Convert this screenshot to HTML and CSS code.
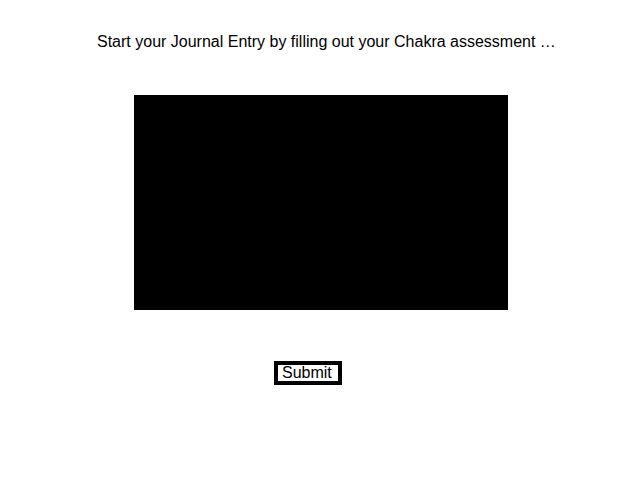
FILE: index.html
```html
<!DOCTYPE html>
<html>
<head>
<meta charset="utf-8">
<link rel="stylesheet" href="styles.css">
</head>
<body>
<main class="page">
  <p class="intro">Start your Journal Entry by filling out your Chakra assessment …</p>
  <div class="video"></div>
  <div class="actions">
    <button class="submit" type="button">Submit</button>
  </div>
</main>
</body>
</html>
```

FILE: styles.css
```css
html, body {
  margin: 0;
  padding: 0;
  background: #ffffff;
}
.page {
  width: 640px;
  height: 480px;
  font-family: "Liberation Sans", Arial, sans-serif;
  color: #000000;
  display: flex;
  flex-direction: column;
}
.intro {
  margin: 33px 0 0 97px;
  font-size: 16px;
  line-height: 18px;
  white-space: nowrap;
}
.video {
  margin: 44px 0 0 134px;
  width: 374px;
  height: 215px;
  background: #000000;
}
.actions {
  margin: 51px 0 0 274px;
}
.submit {
  box-sizing: border-box;
  width: 68px;
  height: 24px;
  padding: 0 0 0 4px;
  border: 4px solid #000000;
  background: #ffffff;
  font-family: "Liberation Sans", Arial, sans-serif;
  font-size: 16px;
  line-height: 16px;
  color: #000000;
  text-align: left;
}
```
